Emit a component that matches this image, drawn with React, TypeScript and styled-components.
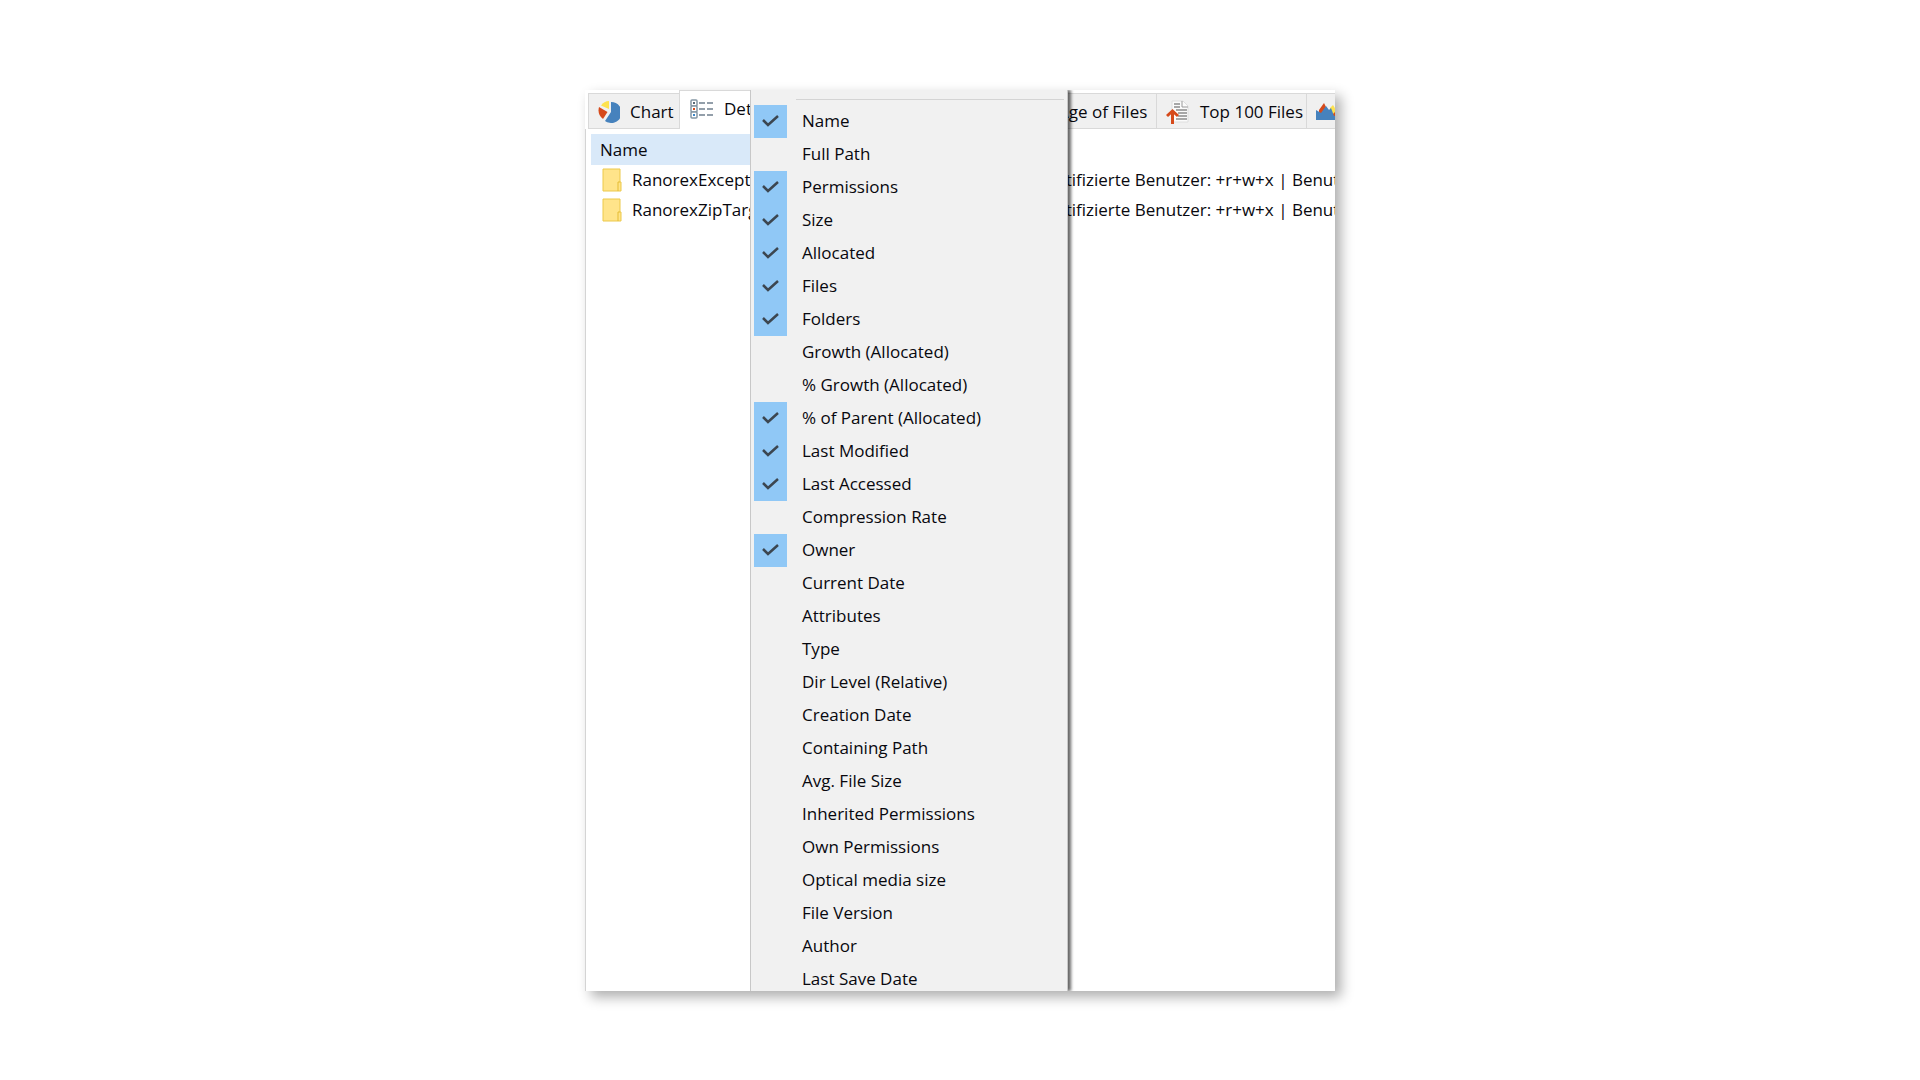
import React from "react";
import styled, { createGlobalStyle } from "styled-components";

const Global = createGlobalStyle`
  *, *::before, *::after { box-sizing: border-box; }
  body { margin: 0; background: #ffffff; }
  button, input, table { font: inherit; color: inherit; }
`;

const Page = styled.main`
  display: flex;
  justify-content: center;
  height: 100vh;
  padding: 90px 24px 89px;
  overflow: hidden;
  font: 17px/24px "Open Sans", "Noto Sans", sans-serif;
  color: #08080e;
`;

const Window = styled.section`
  position: relative;
  display: flex;
  flex-direction: column;
  width: 100%;
  max-width: 750px;
  background: #ffffff;
  box-shadow: 6px 6px 12px rgba(0, 0, 0, 0.32);
`;

const Clip = styled.div`
  display: flex;
  flex: 1;
  flex-direction: column;
  min-height: 0;
  overflow: hidden;
`;

const Tabs = styled.div`
  display: flex;
  align-items: flex-end;
  height: 39px;
  padding-left: 3px;
`;

const Tab = styled.button<{ $width?: number; $active?: boolean }>`
  display: flex;
  flex: ${(p) => (p.$width ? `0 0 ${p.$width}px` : "1")};
  align-items: center;
  gap: 10px;
  height: ${(p) => (p.$active ? 39 : 36)}px;
  padding: ${(p) => (p.$active ? "0 0 2px 10px" : "2px 0 0 9px")};
  border: 0 solid #d9d9d9;
  border-width: 1px 0 ${(p) => (p.$active ? 0 : 1)}px 1px;
  background: ${(p) => (p.$active ? "#ffffff" : "#f0f0f0")};
  white-space: nowrap;
  overflow: hidden;

  svg { flex: none; }
`;

const Panel = styled.div`
  flex: 1;
  padding: 5px 0 0 5px;
  border-left: 1px solid #d4d4d4;
`;

const Table = styled.table`
  width: 100%;
  border-collapse: collapse;
  table-layout: fixed;
`;

const Head = styled.th<{ $width?: number; $shaded?: boolean }>`
  width: ${(p) => (p.$width ? `${p.$width}px` : "auto")};
  height: 31px;
  padding: 0 0 0 9px;
  background: ${(p) => (p.$shaded ? "#d9e9f9" : "transparent")};
  font-weight: 400;
  text-align: left;
`;

const Cell = styled.td`
  height: 30px;
  padding: 0 0 0 11px;
  white-space: nowrap;
`;

const Entry = styled.span`
  display: flex;
  align-items: center;
  gap: 10px;
`;

const Menu = styled.form`
  position: absolute;
  top: 0;
  bottom: 0;
  left: 165px;
  width: 318px;
  padding: 9px 3px 0;
  border: 0 solid #c8c8c8;
  border-width: 0 1px;
  background: #f1f1f1;
  box-shadow: 3px 0 3px rgba(0, 0, 0, 0.6);
  clip-path: inset(0 -10px 0 0);
  overflow: hidden;
`;

const Separator = styled.hr`
  height: 1px;
  margin: 0 0 5px 42px;
  border: 0;
  background: #d4d4d4;
`;

const Item = styled.label`
  display: flex;
  align-items: center;
  gap: 15px;
  height: 33px;
`;

const Name = styled.span`
  padding-bottom: 2px;
`;

const Tick = styled.span`
  display: grid;
  place-items: center;
  width: 33px;
  height: 33px;

  &:has(input:checked) { background: #90c8f6; }
  input:not(:checked) + svg { visibility: hidden; }
`;

const Check = styled.input`
  grid-area: 1 / 1;
  appearance: none;
  width: 33px;
  height: 33px;
  margin: 0;
`;

const Mark = styled.svg`
  grid-area: 1 / 1;
  pointer-events: none;
`;

const PieIcon = () => (
  <svg width="22" height="22" viewBox="0 0 22 22" aria-hidden="true">
    <path d="M13 1A10.500 10.500 0 1 1 7 20L13 11Z" fill="#4682bd" />
    <path d="M11 0V8L3 4.500Q6 0 11 0Z" fill="#fde24f" />
    <path d="M1 6L9.500 11L5 18Q-1 13 1 6Z" fill="#d64a1b" />
  </svg>
);

const ListIcon = () => (
  <svg width="24" height="20" viewBox="0 0 24 20" aria-hidden="true">
    {[1, 7, 13].map((y, i) => (
      <g key={y}>
        <rect x="1" y={y} width="6" height="6" rx="1" fill="#fff" stroke="#8496a4" strokeWidth="1.500" />
        <rect x="3" y={y + 2} width="2" height="2" fill={["#5a6a78", "#d64a1b", "#3a86c8"][i]} />
        <path d={`M9 ${y + 3}H15M17 ${y + 3}H23`} stroke="#70808e" strokeWidth="1.500" />
      </g>
    ))}
  </svg>
);

const DocIcon = () => (
  <svg width="24" height="24" viewBox="0 0 24 24" aria-hidden="true">
    <path d="M6 1H17L22 6V22H6Z" fill="#fbfbfb" stroke="#dedede" />
    <path d="M16 1V7H22" fill="none" stroke="#9a9a9a" />
    <path d="M8 4H14M8 7H14M10 10H21M12 13H21M12 16H21M10 19H21" stroke="#8c8c8c" strokeWidth="1.500" />
    <path d="M1 16L6.500 11L12 16M6.500 12V24" fill="none" stroke="#d64a1b" strokeWidth="3" />
  </svg>
);

const AreaIcon = () => (
  <svg width="24" height="20" viewBox="0 0 24 20" aria-hidden="true">
    <path d="M3 8L8 1L10 5L7 12H3Z" fill="#d64a1b" />
    <path d="M14 6L17 3L20 8V14H14Z" fill="#fde24f" />
    <path d="M17 12L20 9L24 14H17Z" fill="#d64a1b" />
    <path d="M0 8L5 11L10 4L13 8L15 6L18 14L24 12V18H0Z" fill="#4682bd" />
  </svg>
);

const FolderIcon = () => (
  <svg width="20" height="24" viewBox="0 0 20 24" aria-hidden="true">
    <path d="M1 1H18V14H19V23H1Z" fill="#ffe48a" stroke="#ecc94b" />
    <path d="M18 14H16V23" fill="none" stroke="#e5bc35" />
  </svg>
);

const columns: [string, boolean][] = [
  ["Name", true],
  ["Full Path", false],
  ["Permissions", true],
  ["Size", true],
  ["Allocated", true],
  ["Files", true],
  ["Folders", true],
  ["Growth (Allocated)", false],
  ["% Growth (Allocated)", false],
  ["% of Parent (Allocated)", true],
  ["Last Modified", true],
  ["Last Accessed", true],
  ["Compression Rate", false],
  ["Owner", true],
  ["Current Date", false],
  ["Attributes", false],
  ["Type", false],
  ["Dir Level (Relative)", false],
  ["Creation Date", false],
  ["Containing Path", false],
  ["Avg. File Size", false],
  ["Inherited Permissions", false],
  ["Own Permissions", false],
  ["Optical media size", false],
  ["File Version", false],
  ["Author", false],
  ["Last Save Date", false],
];

const folders = ["RanorexException", "RanorexZipTarget"];

export default function App() {
  return (
    <Page>
      <Global />
      <Window>
        <Clip>
          <Tabs role="tablist">
            <Tab role="tab" $width={91}><PieIcon />Chart</Tab>
            <Tab role="tab" $active aria-selected="true"><ListIcon />Details</Tab>
            <Tab role="tab" $width={108}>Age of Files</Tab>
            <Tab role="tab" $width={150}><DocIcon />Top 100 Files</Tab>
            <Tab role="tab" $width={29} aria-label="History"><AreaIcon /></Tab>
          </Tabs>
          <Panel>
            <Table>
              <thead>
                <tr>
                  <Head $width={406} $shaded>Name</Head>
                  <Head aria-label="Permissions" />
                </tr>
              </thead>
              <tbody>
                {folders.map((name) => (
                  <tr key={name}>
                    <Cell><Entry><FolderIcon />{name}</Entry></Cell>
                    <Cell>Authentifizierte Benutzer: +r+w+x | Benutzer</Cell>
                  </tr>
                ))}
              </tbody>
            </Table>
          </Panel>
        </Clip>
        <Menu>
          <Separator />
          {columns.map(([name, on]) => (
            <Item key={name}>
              <Tick>
                <Check type="checkbox" defaultChecked={on} />
                <Mark width="17" height="13" viewBox="0 0 17 13" aria-hidden="true">
                  <path d="M1 5L6 10L16 1" fill="none" stroke="#3c4650" strokeWidth="2.500" />
                </Mark>
              </Tick>
              <Name>{name}</Name>
            </Item>
          ))}
        </Menu>
      </Window>
    </Page>
  );
}
